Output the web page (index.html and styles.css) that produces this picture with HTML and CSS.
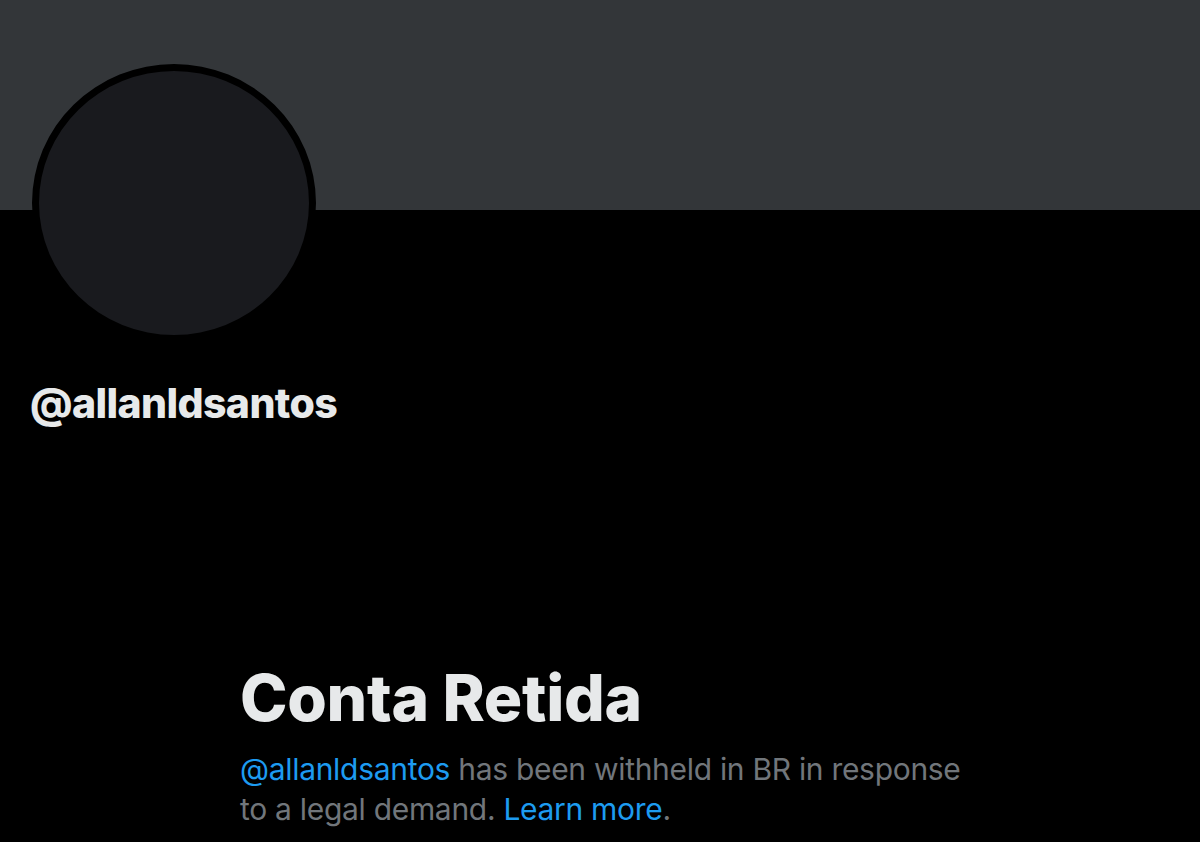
FILE: index.html
```html
<!DOCTYPE html>
<html lang="pt">
<head>
    <meta charset="UTF-8">
    <meta name="viewport" content="width=device-width, initial-scale=1.0">
    <title>@allanldsantos</title>
    <link rel="stylesheet" href="styles.css">
</head>
<body>
    <div class="profile">
        <!-- Banner -->
        <div class="banner"></div>

        <!-- Avatar + handle -->
        <div class="header">
            <div class="avatar"></div>
            <div class="handle">@allanldsantos</div>
        </div>

        <!-- Withheld notice -->
        <div class="notice">
            <h1>Conta Retida</h1>
            <p><a href="#">@allanldsantos</a> has been withheld in BR in response to a legal demand. <a href="#">Learn more</a>.</p>
        </div>
    </div>
</body>
</html>
```

FILE: styles.css
```css
body { margin: 0; padding: 0; background-color: #000000; font-family: Inter, "Liberation Sans", sans-serif; color: #e7e9ea; }
.profile { width: 1200px; height: 842px; overflow: hidden; }
.banner { height: 210px; background-color: #333639; }
.header { padding: 0 0 0 30px; }
.avatar { width: 270px; height: 264px; margin: -146px 0 0 2px; border: 7px solid #000000; border-radius: 50%; background-color: #191a1e; }
.handle { margin-top: 36px; font-size: 41px; font-weight: 800; letter-spacing: -0.6px; }
.notice { width: 740px; margin: 230px 0 0 240px; }
h1 { margin: 0 0 11px; font-size: 64px; font-weight: 800; line-height: 80px; letter-spacing: -0.3px; }
p { margin: 0; font-size: 30px; line-height: 40px; color: #71767b; letter-spacing: -0.3px; }
a { color: #1d9bf0; text-decoration: none; }
```
